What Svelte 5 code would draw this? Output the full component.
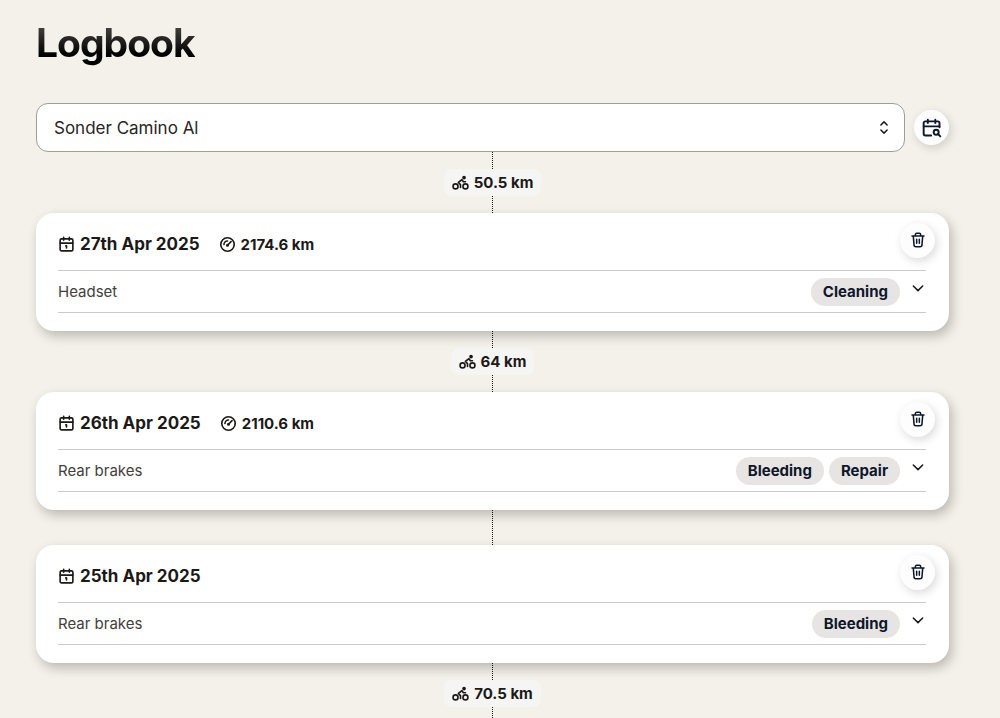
<script>
  let bikes = ["Sonder Camino Al"];
  let bike = bikes[0];

  // distance is what was ridden since the entry, null when nothing was ridden
  let logs = [
    {
      date: "27th Apr 2025",
      odometer: "2174.6 km",
      component: "Headset",
      tags: ["Cleaning"],
      distance: "64 km",
    },
    {
      date: "26th Apr 2025",
      odometer: "2110.6 km",
      component: "Rear brakes",
      tags: ["Bleeding", "Repair"],
      distance: null,
    },
    {
      date: "25th Apr 2025",
      odometer: null,
      component: "Rear brakes",
      tags: ["Bleeding"],
      distance: "70.5 km",
    },
  ];
  let sinceLast = "50.5 km";
  let open = {};

  function removeLog(date) {
    logs = logs.filter((log) => log.date !== date);
  }
</script>

<svelte:head>
  <title>Logbook</title>
</svelte:head>

{#snippet connector(distance)}
  <div class="connector">
    {#if distance}
      <div class="connector__line"></div>
      <div class="distance">
        <svg width="17" height="17" viewBox="0 0 24 24" aria-hidden="true">
          <circle cx="5" cy="17.5" r="3.5" />
          <circle cx="19" cy="17.5" r="3.5" />
          <circle cx="17" cy="5" r="1.5" fill="currentColor" />
          <path d="M12 19v-4l-3-3 5-4 2 3h3" />
        </svg>
        <span>{distance}</span>
      </div>
      <div class="connector__line"></div>
    {:else}
      <div class="connector__line connector__line--long"></div>
    {/if}
  </div>
{/snippet}

<main>
  <h1>Logbook</h1>

  <div class="toolbar">
    <div class="select">
      <select class="select__input" aria-label="Bike" bind:value={bike}>
        {#each bikes as name (name)}
          <option value={name}>{name}</option>
        {/each}
      </select>
      <svg class="select__icon" width="16" height="16" viewBox="0 0 24 24" aria-hidden="true">
        <path d="m7 16 5 5 5-5M7 8l5-5 5 5" />
      </svg>
    </div>
    <button class="round" type="button" aria-label="Search by date">
      <svg width="20" height="20" viewBox="0 0 24 24" aria-hidden="true">
        <path d="M16 2v4M7 2v4M2 10h19" />
        <path d="M21 11V6a2 2 0 0 0-2-2H4a2 2 0 0 0-2 2v13a2 2 0 0 0 2 2h7" />
        <circle cx="17" cy="17" r="3" />
        <path d="m22 22-2.8-2.8" />
      </svg>
    </button>
  </div>

  {@render connector(sinceLast)}

  {#each logs as log (log.date)}
    <article class="card">
      <header>
        <h2>
          <svg width="17" height="17" viewBox="0 0 24 24" aria-hidden="true">
            <rect x="3" y="4" width="18" height="17" rx="2" />
            <path d="M16 2v4M8 2v4M3 10h18M11 14h1v3" />
          </svg>
          {log.date}
        </h2>
        {#if log.odometer}
          <p class="odometer">
            <svg width="17" height="17" viewBox="0 0 24 24" aria-hidden="true">
              <circle cx="12" cy="12" r="9.5" />
              <path d="m12 13 5-5M7 12a5 5 0 0 1 5-5" />
              <circle cx="12" cy="13" r="1" />
            </svg>
            {log.odometer}
          </p>
        {/if}
        <button
          class="round"
          type="button"
          aria-label="Delete log of {log.date}"
          on:click={() => removeLog(log.date)}
        >
          <svg width="16" height="16" viewBox="0 0 24 24" aria-hidden="true">
            <path d="M3 6h18M5 7l1 12a3 3 0 0 0 3 3h6a3 3 0 0 0 3-3l1-12M8 6V4a2 2 0 0 1 2-2h4a2 2 0 0 1 2 2v2M10 11v6M14 11v6" />
          </svg>
        </button>
      </header>
      <button
        class="row"
        type="button"
        aria-expanded={!!open[log.date]}
        on:click={() => (open[log.date] = !open[log.date])}
      >
        <span class="row__label">{log.component}</span>
        <span class="tags">
          {#each log.tags as tag (tag)}
            <span class="tag">{tag}</span>
          {/each}
        </span>
        <svg class="row__chevron" width="16" height="16" viewBox="0 0 24 24" aria-hidden="true">
          <path d="m5 9 7 7 7-7" />
        </svg>
      </button>
    </article>
    {@render connector(log.distance)}
  {/each}
</main>

<style>
  :global(body) {
    background: #f4f1ea;
  }

  main {
    box-sizing: border-box;
    height: 100vh;
    overflow: hidden;
    padding: 19px 51px 0 36px;
    font-family: Inter, "Liberation Sans", sans-serif;
    color: #1c1917;
  }

  svg {
    fill: none;
    stroke: currentColor;
    stroke-width: 2.3;
    stroke-linecap: round;
    stroke-linejoin: round;
    flex: none;
  }

  button {
    font: inherit;
    border: none;
    cursor: pointer;
  }

  h1 {
    width: fit-content;
    margin: 0 0 36px;
    font-size: 39px;
    line-height: 48px;
    font-weight: 700;
    letter-spacing: -1px;
    background: linear-gradient(#57534e, #000 75%);
    -webkit-background-clip: text;
    background-clip: text;
    color: transparent;
  }

  .toolbar {
    display: flex;
    align-items: center;
    gap: 9px;
  }

  .select {
    position: relative;
    flex: 1;
  }

  .select__input {
    display: block;
    width: 100%;
    height: 49px;
    padding: 0 40px 0 17px;
    font: inherit;
    font-size: 17px;
    color: #292524;
    background: white;
    border: 1px solid #a09c96;
    border-radius: 12px;
    appearance: none;
  }

  .select__icon {
    position: absolute;
    right: 13px;
    top: 17px;
    height: 15px;
    pointer-events: none;
  }

  .round {
    display: flex;
    align-items: center;
    justify-content: center;
    flex: none;
    width: 35px;
    height: 35px;
    padding: 0;
    color: #0f172a;
    background: #fdfdfd;
    border-radius: 50%;
    box-shadow: 2px 3px 10px rgba(0, 0, 0, 0.15);
  }

  .connector {
    display: flex;
    flex-direction: column;
    align-items: center;
  }

  .connector__line {
    height: 17px;
    border-left: 1px dotted #1c1917;
  }

  .connector__line--long {
    height: 35px;
  }

  .distance {
    display: flex;
    align-items: center;
    gap: 5px;
    height: 27px;
    padding: 0 8px;
    font-size: 15px;
    font-weight: 700;
    background: #f5f5f4;
    border-radius: 8px;
  }

  .card {
    padding: 0 23px 18px 22px;
    background: white;
    border-radius: 18px;
    box-shadow: 3px 5px 12px rgba(0, 0, 0, 0.24);
  }

  header {
    display: flex;
    align-items: center;
    height: 57px;
    padding-top: 5px;
    box-sizing: border-box;
  }

  h2,
  .odometer {
    display: flex;
    align-items: center;
    gap: 5px;
    margin: 0;
    font-weight: 700;
  }

  h2 {
    font-size: 17px;
  }

  .odometer {
    margin-left: 19px;
    font-size: 15px;
  }

  header .round {
    margin: -8px -9px 0 auto;
  }

  .row {
    display: flex;
    align-items: center;
    gap: 10px;
    width: 100%;
    height: 43px;
    padding: 0;
    font-size: 15px;
    text-align: left;
    color: #1c1917;
    background: none;
    border-top: 1px solid #ccc9c6;
    border-bottom: 1px solid #ccc9c6;
  }

  .row__label {
    flex: 1;
    color: #44403c;
  }

  .tags {
    display: flex;
    gap: 5px;
  }

  .tag {
    padding: 0 12px;
    font-weight: 700;
    line-height: 28px;
    color: #0f172a;
    background: #e7e5e4;
    border-radius: 14px;
  }

  .row__chevron {
    margin-bottom: 7px;
  }
</style>
